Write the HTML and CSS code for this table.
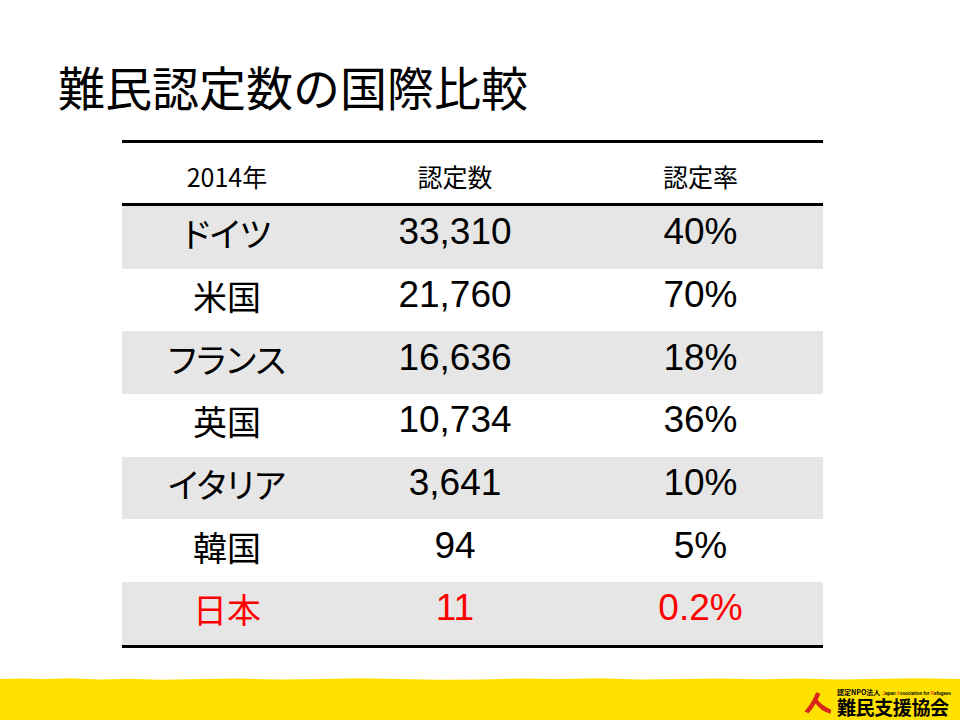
FILE: index.html
```html
<!DOCTYPE html>
<html lang="ja">
<head>
<meta charset="utf-8">
<title>難民認定数の国際比較</title>
<link rel="stylesheet" href="styles.css">
</head>
<body>
<div class="slide">
  <h1 class="title">難民認定数の国際比較</h1>
  <div class="stats">
    <div class="row head">
      <div class="cell jp">2014年</div>
      <div class="cell jp">認定数</div>
      <div class="cell jp">認定率</div>
    </div>
    <div class="row shade">
      <div class="cell label">ドイツ</div>
      <div class="cell num">33,310</div>
      <div class="cell num">40%</div>
    </div>
    <div class="row">
      <div class="cell label">米国</div>
      <div class="cell num">21,760</div>
      <div class="cell num">70%</div>
    </div>
    <div class="row shade">
      <div class="cell label">フランス</div>
      <div class="cell num">16,636</div>
      <div class="cell num">18%</div>
    </div>
    <div class="row">
      <div class="cell label">英国</div>
      <div class="cell num">10,734</div>
      <div class="cell num">36%</div>
    </div>
    <div class="row shade">
      <div class="cell label">イタリア</div>
      <div class="cell num">3,641</div>
      <div class="cell num">10%</div>
    </div>
    <div class="row">
      <div class="cell label">韓国</div>
      <div class="cell num">94</div>
      <div class="cell num">5%</div>
    </div>
    <div class="row shade red">
      <div class="cell label">日本</div>
      <div class="cell num">11</div>
      <div class="cell num">0.2%</div>
    </div>
  </div>
  <footer class="band">
    <svg class="edge" width="960" height="5" viewBox="0 0 960 5" preserveAspectRatio="none">
      <polygon fill="#ffe100" points="0,2 20,1.5 45,2 70,1.2 100,2.5 130,1.8 160,2.8 200,2 240,1.5 280,2.6 320,2 360,1.2 400,2 440,2.8 480,2.4 520,1.5 560,2 600,1.3 640,2.5 680,2 720,1.4 760,2.2 800,1.6 840,2.6 880,1.8 920,1.2 960,2 960,5 0,5"/>
    </svg>
    <div class="band-body">
      <div class="logo">
        <svg class="mark" width="28" height="24" viewBox="0 0 30 25">
          <path fill="#d9261c" d="M13 1 L17.5 2.5 Q13 14 5 23.5 L0.5 21.5 Q9 12 13 1 Z"/>
          <path fill="#d9261c" d="M11 11 L14 8.5 Q20 16 29 19.5 L28.5 24 Q18 22 11 11 Z"/>
        </svg>
        <div class="logo-text">
          <div class="logo-sub"><span class="npo">認定NPO法人</span><span class="en"><b>J</b>apan <b>A</b>ssociation for <b>R</b>efugees</span></div>
          <div class="logo-name">難民支援協会</div>
        </div>
      </div>
    </div>
  </footer>
</div>
</body>
</html>
```
FILE: styles.css
```css
html, body {
  margin: 0;
  padding: 0;
  background: #ffffff;
}
.slide {
  width: 960px;
  height: 720px;
  display: flex;
  flex-direction: column;
  overflow: hidden;
  font-family: "Noto Sans CJK JP", "Noto Sans", sans-serif;
  color: #000;
}
.title {
  margin: 62px 0 0 58px;
  font-size: 47px;
  line-height: 47px;
  height: 47px;
  font-weight: 400;
  white-space: nowrap;
}
.stats {
  margin: 31px 0 0 122px;
  width: 701px;
  border-top: 3px solid #000;
  border-bottom: 3px solid #000;
}
.row {
  display: grid;
  grid-template-columns: 210px 246px 245px;
  height: 62.7px;
  align-items: center;
}
.row.head {
  height: 60px;
  border-bottom: 3px solid #000;
}
.row.shade {
  background: #e6e6e6;
}
.row.red {
  color: #ff0000;
}
.cell {
  text-align: center;
  white-space: nowrap;
}
.head .cell {
  font-size: 25px;
  line-height: 30px;
  padding-top: 6px;
}
.label {
  font-size: 34px;
  line-height: 40px;
  padding-bottom: 8px;
  font-feature-settings: "palt";
}
.num {
  font-family: "Liberation Sans", Arial, sans-serif;
  font-size: 37px;
  line-height: 40px;
  padding-bottom: 10px;
}
.band {
  margin-top: auto;
  display: flex;
  flex-direction: column;
}
.edge {
  display: block;
}
.band-body {
  background: #ffe100;
  height: 38px;
  display: flex;
  justify-content: flex-end;
  align-items: flex-start;
}
.logo {
  display: flex;
  align-items: flex-start;
  gap: 5px;
  margin: 6px 9px 0 0;
}
.mark {
  display: block;
  margin-top: 3px;
}
.logo-text {
  display: flex;
  flex-direction: column;
  width: 114px;
}
.logo-sub {
  display: flex;
  justify-content: space-between;
  align-items: baseline;
  height: 9px;
  line-height: 9px;
  white-space: nowrap;
}
.npo {
  font-size: 7px;
  font-weight: 700;
}
.en {
  font-family: "Liberation Sans", Arial, sans-serif;
  font-size: 4.5px;
  font-weight: 700;
}
.en b {
  color: #e8501c;
}
.logo-name {
  font-size: 19px;
  line-height: 19px;
  font-weight: 700;
  letter-spacing: -0.4px;
  white-space: nowrap;
}
```
